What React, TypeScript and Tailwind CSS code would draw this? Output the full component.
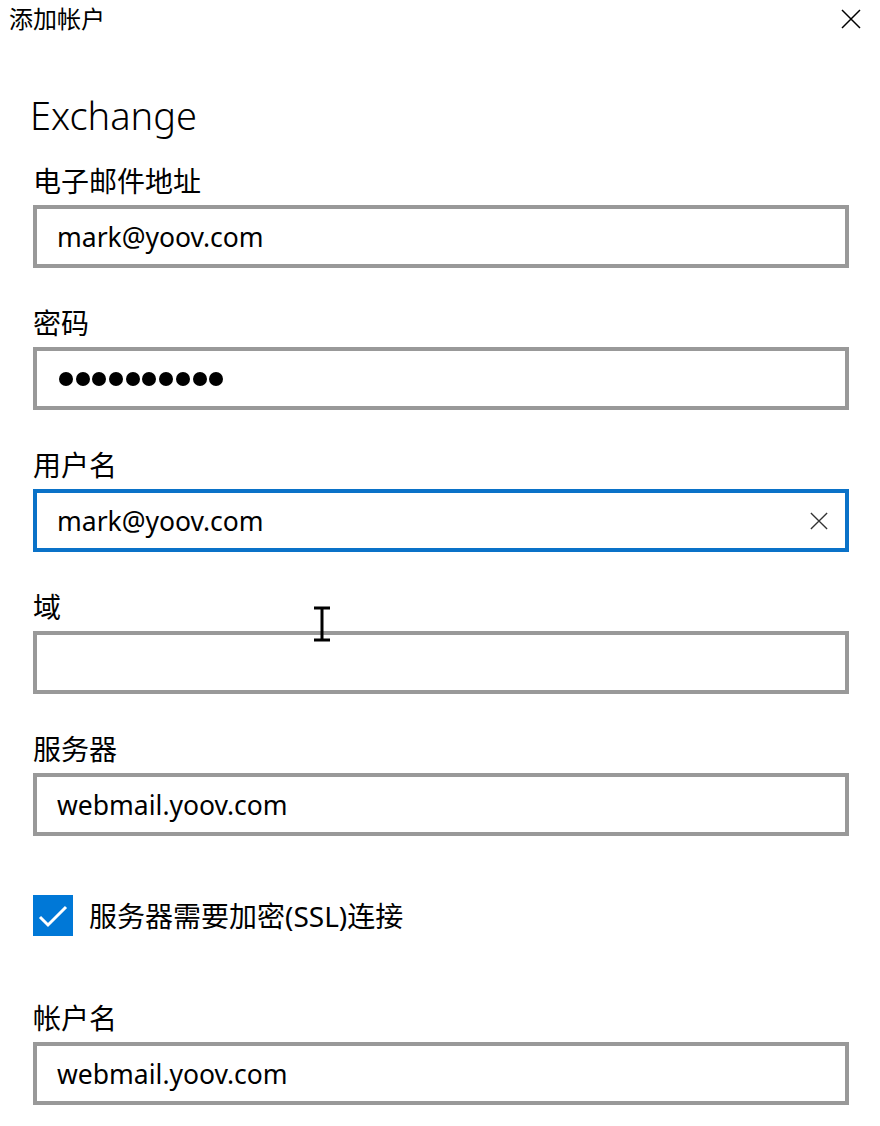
import { useState } from "react";

const FONT = "font-['Noto_Sans','Noto_Sans_CJK_SC',sans-serif]";

interface FieldProps {
  label: string;
  value?: string;
  focused?: boolean;
  password?: boolean;
  className?: string;
}

function CloseGlyph({ className }: { className: string }) {
  return (
    <svg className={className} viewBox="0 0 20 20" fill="none" stroke="currentColor" strokeWidth={1.5}>
      <path d="M1 1L19 19M19 1L1 19" />
    </svg>
  );
}

function Field({ label, value = "", focused, password, className = "" }: FieldProps) {
  return (
    <div className={`flex flex-col ${className}`}>
      <label className="mb-[6px] text-[28px] leading-[36px] text-black">{label}</label>
      <div
        className={`flex h-[63px] items-center border-4 bg-white pl-[20px] pr-[17px] ${
          focused ? "border-[#0a72c8]" : "border-[#999999]"
        }`}
      >
        {password ? (
          <div className="ml-[2px] flex gap-[2.7px]">
            {Array.from({ length: value.length }).map((_, i) => (
              <span key={i} className="h-[14px] w-[14px] rounded-full bg-black" />
            ))}
          </div>
        ) : (
          <span className="text-[26.5px] leading-[34px] text-black">{value}</span>
        )}
        {focused && value && (
          <CloseGlyph className="ml-auto h-[18px] w-[18px] text-[#333333]" />
        )}
      </div>
    </div>
  );
}

export default function App() {
  const [ssl, setSsl] = useState(true);

  return (
    <div className={`relative h-[1126px] w-[880px] overflow-hidden bg-white ${FONT}`}>
      <div className="flex items-start justify-between pl-[9px] pr-[19px] pt-[4px]">
        <h1 className="text-[24px] leading-[30px] text-black">添加帐户</h1>
        <CloseGlyph className="mt-[5px] h-[20px] w-[20px] text-black" />
      </div>

      <div className="flex flex-col pl-[33px] pr-[31px]">
        <h2 className="ml-[-3px] mt-[57px] text-[38px] font-light leading-[48px] text-black">Exchange</h2>

        <Field className="mt-[24px]" label="电子邮件地址" value="mark@yoov.com" />
        <Field className="mt-[37px]" label="密码" value="••••••••••" password />
        <Field className="mt-[37px]" label="用户名" value="mark@yoov.com" focused />
        <Field className="mt-[37px]" label="域" />
        <Field className="mt-[37px]" label="服务器" value="webmail.yoov.com" />

        <button
          type="button"
          onClick={() => setSsl(!ssl)}
          className="mt-[59px] flex items-center gap-[16px] self-start"
        >
          <span
            className={`flex h-[41px] w-[40px] items-center justify-center ${
              ssl ? "bg-[#0078d7]" : "border-2 border-black bg-white"
            }`}
          >
            {ssl && (
              <svg className="h-[26px] w-[30px]" viewBox="0 0 30 26" fill="none" stroke="white" strokeWidth={3}>
                <path d="M2 14L10 22L28 4" />
              </svg>
            )}
          </span>
          <span className="text-[28px] leading-[36px] text-black">服务器需要加密(SSL)连接</span>
        </button>

        <Field className="mt-[64px]" label="帐户名" value="webmail.yoov.com" />
      </div>

      <svg className="absolute left-[312px] top-[606px] h-[36px] w-[20px]" viewBox="0 0 20 36" fill="none" stroke="black" strokeWidth={3}>
        <path d="M2 2H18M10 2V34M2 34H18" />
      </svg>
    </div>
  );
}
